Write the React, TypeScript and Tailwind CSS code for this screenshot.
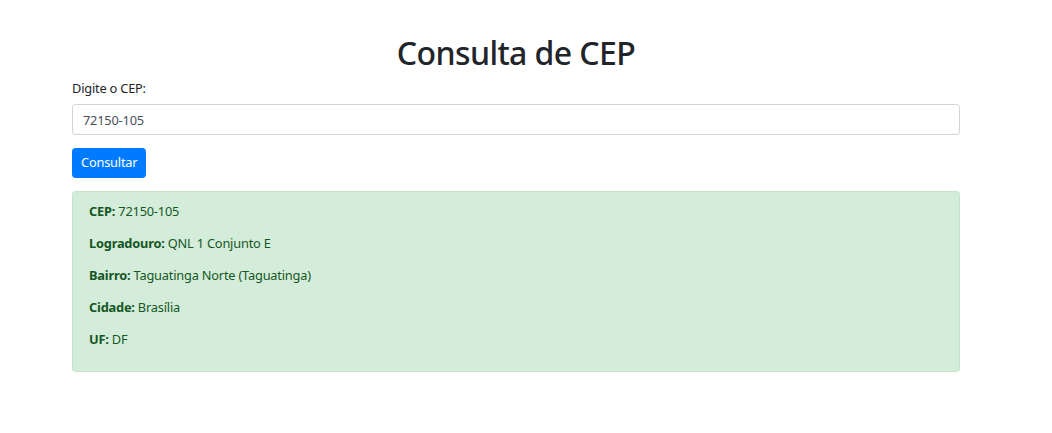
export default function App() {
    const data = [
        { label: "CEP:", value: "72150-105" },
        { label: "Logradouro:", value: "QNL 1 Conjunto E" },
        { label: "Bairro:", value: "Taguatinga Norte (Taguatinga)" },
        { label: "Cidade:", value: "Brasília" },
        { label: "UF:", value: "DF" },
    ];

    return (
        <div className="min-h-[433px] bg-white text-[#212529] text-[12.8px] leading-[1.5] tracking-[-0.2px]" style={{ fontFamily: '"Noto Sans", sans-serif' }}>
            <div className="w-[888px] ml-[72px] pt-[34px]">
                <h1 className="text-center text-[32px] leading-[1.2] font-medium tracking-[-0.6px] mb-[6.4px]">Consulta de CEP</h1>
                <div className="mb-[12.8px]">
                    <label className="block mb-[6.4px]">Digite o CEP:</label>
                    <input
                        className="block w-full h-[30.4px] px-[10px] border border-[#ced4da] rounded-[3.2px] text-[#495057] outline-none"
                        defaultValue="72150-105"
                    />
                </div>
                <button className="h-[30.4px] px-[8px] bg-[#007bff] text-white rounded-[3.2px] border border-[#007bff]">Consultar</button>
                <div className="mt-[12.8px] border border-[#c3e6cb] bg-[#d4edda] text-[#155724] rounded-[3.2px] px-[16px] pt-[10px] pb-[9.6px]">
                    {data.map((d) => (
                        <p key={d.label} className="mb-[12.8px]">
                            <strong className="font-bold">{d.label}</strong> {d.value}
                        </p>
                    ))}
                </div>
            </div>
        </div>
    );
}
